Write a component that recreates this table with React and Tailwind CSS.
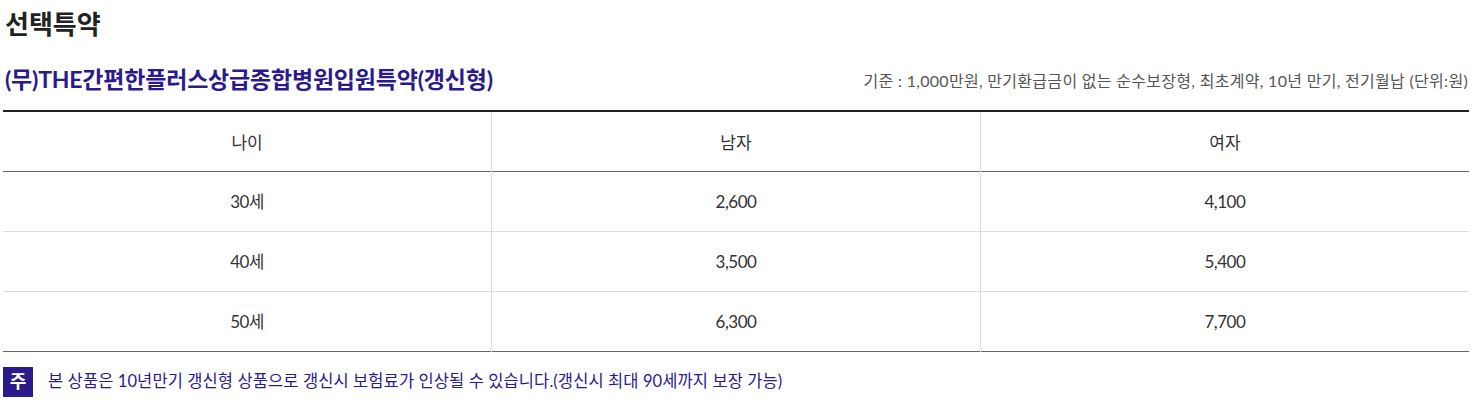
import React from 'react';

const rows = [
  { age: '30세', male: '2,600', female: '4,100' },
  { age: '40세', male: '3,500', female: '5,400' },
  { age: '50세', male: '6,300', female: '7,700' },
];

const font = { fontFamily: 'Lato, "Noto Sans CJK KR", sans-serif' };

export default function App() {
  return (
    <div className="w-[1474px] h-[402px] bg-white text-[#222]" style={font}>
      <h1 className="pl-[5px] pt-[6px] text-[26px] font-bold leading-[36px] text-[#222]">
        선택특약
      </h1>

      <div className="mt-[22px] flex items-end justify-between pl-[5px] pr-[6px]">
        <h2 className="text-[23px] font-bold leading-[30px] tracking-[-0.2px] text-[#2b1a8c]">
          (무)THE간편한플러스상급종합병원입원특약(갱신형)
        </h2>
        <p className="pb-[2px] text-[16px] leading-[22px] tracking-[0.3px] text-[#555]">
          기준 : 1,000만원, 만기환급금이 없는 순수보장형, 최초계약, 10년 만기, 전기월납 (단위:원)
        </p>
      </div>

      <table className="mx-[3px] mt-[16px] w-[1466px] table-fixed border-collapse border-t-[2px] border-t-[#222] text-[17px] text-[#333]">
        <thead>
          <tr className="h-[60px] border-b border-b-[#666]">
            <th className="border-r border-r-[#ddd] pt-[2px] font-normal">나이</th>
            <th className="border-r border-r-[#ddd] pt-[2px] font-normal">남자</th>
            <th className="pt-[2px] font-normal">여자</th>
          </tr>
        </thead>
        <tbody>
          {rows.map((r, i) => (
            <tr
              key={r.age}
              className={i === rows.length - 1 ? 'h-[60px] border-b border-b-[#666]' : 'h-[60px] border-b border-b-[#ddd]'}
            >
              <td className="border-r border-r-[#ddd] pt-[2px] text-center tracking-[-0.5px]">{r.age}</td>
              <td className="border-r border-r-[#ddd] pt-[2px] text-center tracking-[-0.5px]">{r.male}</td>
              <td className="pt-[2px] text-center tracking-[-0.5px]">{r.female}</td>
            </tr>
          ))}
        </tbody>
      </table>

      <div className="mt-[15px] flex items-center gap-[15px] pl-[3px]">
        <span className="flex h-[30px] w-[30px] items-center justify-center bg-[#2b1a8c] text-[18px] font-bold text-white">
          주
        </span>
        <p className="text-[16.5px] tracking-[0.1px] text-[#2b1a8c]">
          본 상품은 10년만기 갱신형 상품으로 갱신시 보험료가 인상될 수 있습니다.(갱신시 최대 90세까지 보장 가능)
        </p>
      </div>
    </div>
  );
}
